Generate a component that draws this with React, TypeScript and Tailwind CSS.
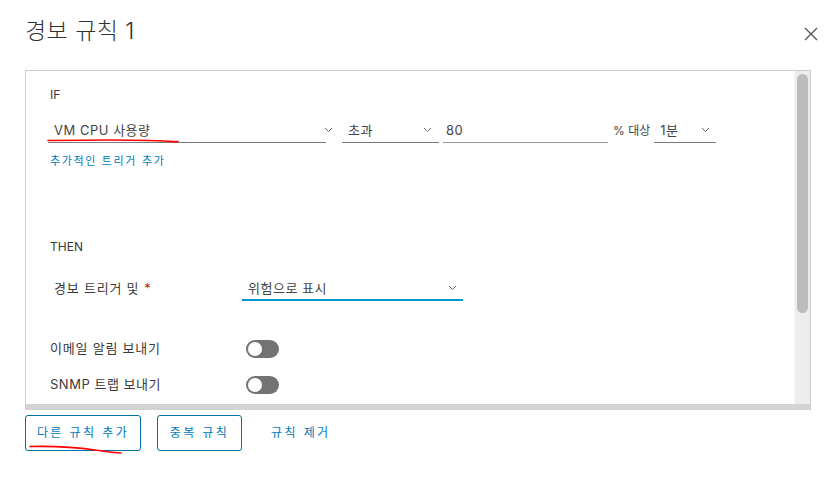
import React from "react";

const Chevron = () => (
  <svg width="9" height="6" viewBox="0 0 9 6" fill="none">
    <path d="M1 1l3.5 3.5L8 1" stroke="#6a6a6a" strokeWidth="1" />
  </svg>
);

interface SelectProps {
  value: string;
  width: string;
  active?: boolean;
  chevronRight?: string;
}

function FakeSelect({ value, width, active, chevronRight = "right-[6px]" }: SelectProps) {
  return (
    <div className={`relative ${width} h-[24px] flex items-center pl-[6px] ${active ? "border-b-2 border-[#0095d3]" : "border-b border-[#7a7a7a]"}`}>
      <span className="text-[13px] text-[#454545] leading-none tracking-[0.04em]">{value}</span>
      <span className={`absolute ${chevronRight} top-[8px] flex`}>
        <Chevron />
      </span>
    </div>
  );
}

function Toggle() {
  return (
    <div className="w-[33px] h-[18px] rounded-full bg-[#737373] flex items-center pl-[2px]">
      <div className="w-[14px] h-[14px] rounded-full bg-white" />
    </div>
  );
}

export default function App() {
  return (
    <div
      className="relative w-[835px] h-[487px] bg-white overflow-hidden text-[#3a3a3a]"
      style={{ fontFamily: 'Inter, "Noto Sans CJK KR", sans-serif' }}
    >
      {/* HEADER */}
      <div className="h-[70px] flex items-start justify-between pl-[25px] pr-[17px]">
        <h1 className="mt-[17px] text-[23px] font-light text-[#313131] leading-[28px] tracking-[0.02em]">경보 규칙 1</h1>
        <button className="mt-[27px] flex">
          <svg width="14" height="14" viewBox="0 0 14 14">
            <path d="M1 1l12 12M13 1L1 13" stroke="#555" strokeWidth="1.3" />
          </svg>
        </button>
      </div>

      {/* RULE PANEL */}
      <div className="ml-[25px] w-[786px] h-[340px] border border-[#cccccc] border-b-0 flex flex-col">
        <div className="flex-1 flex min-h-0">
          <div className="flex-1 pl-[22px] pt-[16px]">
            <div className="pl-[2px] text-[12px] leading-[16px]">IF</div>

            <div className="mt-[16px] flex items-end">
              <FakeSelect value="VM CPU 사용량" width="w-[278px]" chevronRight="right-[-7px]" />
              <div className="w-[16px]" />
              <FakeSelect value="초과" width="w-[97px]" chevronRight="right-[7px]" />
              <div className="w-[4px]" />
              <div className="w-[165px] h-[24px] flex items-center pl-[3px] border-b border-[#9a9a9a]">
                <span className="text-[13px] text-[#454545] leading-none tracking-[0.04em]">80</span>
              </div>
              <span className="ml-[5px] h-[24px] flex items-center text-[12px] text-[#454545]">% 대상</span>
              <div className="w-[4px]" />
              <FakeSelect value="1분" width="w-[62px]" chevronRight="right-[6px]" />
            </div>

            <a className="block mt-[11px] pl-[2px] text-[11px] leading-[14px] tracking-[0.15em] text-[#0079b8] cursor-pointer">
              추가적인 트리거 추가
            </a>

            <div className="mt-[71px] pl-[2px] text-[12px] leading-[16px]">THEN</div>

            <div className="mt-[22px] flex items-end">
              <div className="w-[194px] h-[24px] flex items-center pl-[6px] text-[13px] tracking-[0.06em]">
                경보 트리거 및<span className="ml-[5px] text-[#c92100]">*</span>
              </div>
              <FakeSelect value="위험으로 표시" width="w-[221px]" active chevronRight="right-[6px]" />
            </div>

            <div className="mt-[39px] flex items-center h-[18px]">
              <span className="w-[198px] pl-[2px] text-[13px] tracking-[0.06em]">이메일 알림 보내기</span>
              <Toggle />
            </div>
            <div className="mt-[18px] flex items-center h-[18px]">
              <span className="w-[198px] pl-[2px] text-[13px] tracking-[0.04em]">SNMP 트랩 보내기</span>
              <Toggle />
            </div>
          </div>

          {/* scrollbar */}
          <div className="w-[16px] bg-[#ededed] border-l border-[#f6f6f6] pt-[3px] pl-[2px]">
            <div className="w-[11px] h-[239px] rounded-full bg-[#bcbcbc]" />
          </div>
        </div>
        <div className="h-[6px] bg-[#d3d3d3]" />
      </div>

      {/* FOOTER BUTTONS */}
      <div className="mt-[5px] ml-[25px] flex items-center">
        <button className="w-[116px] h-[36px] border border-[#0072a3] rounded-[3px] text-[12px] tracking-[0.2em] text-[#0079b8]">
          다른 규칙 추가
        </button>
        <button className="ml-[16px] w-[85px] h-[36px] border border-[#0072a3] rounded-[3px] text-[12px] tracking-[0.2em] text-[#0079b8]">
          중복 규칙
        </button>
        <button className="ml-[16px] h-[36px] px-[13px] text-[12px] tracking-[0.2em] text-[#0079b8]">
          규칙 제거
        </button>
      </div>

      {/* red hand-drawn annotations */}
      <svg className="absolute left-0 top-0 pointer-events-none" width="835" height="487">
        <path d="M48 140.5 C 80 140, 120 139.5, 150 140.5 S 172 142, 178 141.5" stroke="#ff0000" strokeWidth="1.6" fill="none" strokeLinecap="round" />
        <path d="M30 446.5 C 55 446, 75 447, 95 450 S 115 453, 121 453" stroke="#ff0000" strokeWidth="1.6" fill="none" strokeLinecap="round" />
      </svg>
    </div>
  );
}
